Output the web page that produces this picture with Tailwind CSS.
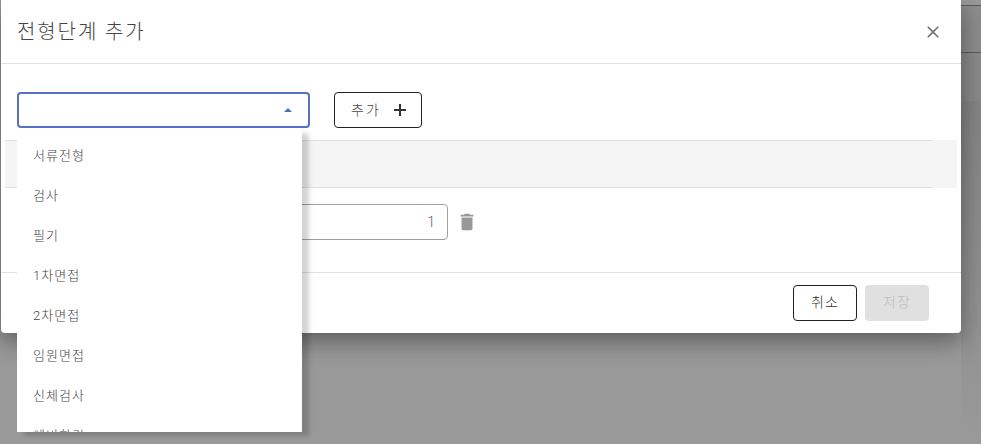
<!DOCTYPE html>
<html lang="ko">
<head>
  <meta charset="UTF-8">
  <title>전형단계 추가</title>
  <script src="https://cdn.jsdelivr.net/npm/@tailwindcss/browser@4"></script>
</head>
<body class="h-[444px] w-[981px] overflow-hidden bg-[#999999] font-['Roboto','Noto_Sans_CJK_KR',sans-serif]">
  <div class="relative h-[444px] w-[981px] overflow-hidden">
    <!-- 모달 뒤 배경 -->
    <div class="flex h-[444px] flex-col items-end">
      <div class="mt-[5px] h-[48px] w-[20px] border-y border-[#5a5a5a] bg-[#8c8c8c]"></div>
      <div class="h-[49px] w-[20px] border-b border-[#858585] bg-[#8a8a8a]"></div>
      <div class="h-[342px] w-[20px] bg-gradient-to-b from-[#848484] to-[#999999]"></div>
    </div>

    <!-- 모달 -->
    <div class="absolute left-[1px] top-0 flex h-[333px] w-[960px] flex-col rounded-b-[4px] bg-white shadow-[0_8px_24px_rgba(0,0,0,0.4)]">
      <div class="flex h-[64px] flex-none items-center justify-between border-b border-[#e0e0e0] pl-[16px] pr-[18px]">
        <h2 class="text-[20px] font-light tracking-[1.9px] text-[#444444]">전형단계 추가</h2>
        <svg class="h-[20px] w-[20px] text-[#757575]" viewBox="0 0 24 24" fill="currentColor"><path d="M19 6.41 17.59 5 12 10.59 6.41 5 5 6.41 10.59 12 5 17.59 6.41 19 12 13.41 17.59 19 19 17.59 13.41 12z"/></svg>
      </div>

      <div class="flex-1">
        <div class="flex items-center pl-[16px] pt-[28px]">
          <div class="flex h-[36px] w-[293px] items-center justify-end rounded-[4px] border-2 border-[#5570c4] pr-[16px]">
            <span class="h-0 w-0 border-x-[4px] border-b-[4px] border-x-transparent border-b-[#4f6fc4]"></span>
          </div>
          <button class="ml-[24px] flex h-[36px] w-[88px] items-center justify-center gap-[12px] rounded-[4px] border border-[#222222] pl-[2px] text-[14px] font-light tracking-[2px] text-[#444444]">
            추가
            <svg class="h-[14px] w-[14px]" viewBox="0 0 14 14" fill="#333333"><path d="M6 1h2v5h5v2H8v5H6V8H1V6h5z"/></svg>
          </button>
        </div>

        <div class="mt-[12px] ml-[4px] h-[48px] w-[952px] bg-[#f5f5f5]">
          <div class="h-[48px] w-[928px] border-y border-[#e0e0e0]"></div>
        </div>

        <div class="flex items-center pt-[16px]">
          <div class="ml-[290px] flex h-[36px] w-[157px] items-center justify-end rounded-[4px] border border-[#a0a0a0] pr-[12px] text-[14px] font-light text-[#666666]">1</div>
          <svg class="ml-[8px] h-[22px] w-[22px] text-[#999999]" viewBox="0 0 24 24" fill="currentColor"><path d="M6 19c0 1.1.9 2 2 2h8c1.1 0 2-.9 2-2V7H6v12zM19 4h-3.5l-1-1h-5l-1 1H5v2h14V4z"/></svg>
        </div>
      </div>

      <div class="flex h-[61px] flex-none items-center justify-end gap-[8px] border-t border-[#e0e0e0] pb-[1px] pr-[32px]">
        <button class="h-[36px] w-[64px] rounded-[4px] border border-[#222222] text-[14px] font-light tracking-[1px] text-[#333333]">취소</button>
        <button class="h-[36px] w-[64px] rounded-[4px] bg-[#e0e0e0] text-[14px] font-light tracking-[1px] text-[#bdbdbd]">저장</button>
      </div>
    </div>

    <!-- 드롭다운 목록 -->
    <ul class="absolute left-[17px] top-[129px] h-[303px] w-[285px] overflow-hidden rounded-t-[4px] bg-white text-[13px] font-light tracking-[1px] text-[#444444] shadow-[7px_4px_4px_rgba(0,0,0,0.17)]">
      <li class="mt-[7px] flex h-[40px] items-center pl-[16px]">서류전형</li>
      <li class="flex h-[40px] items-center pl-[16px]">검사</li>
      <li class="flex h-[40px] items-center pl-[16px]">필기</li>
      <li class="flex h-[40px] items-center pl-[16px]">1차면접</li>
      <li class="flex h-[40px] items-center pl-[16px]">2차면접</li>
      <li class="flex h-[40px] items-center pl-[16px]">임원면접</li>
      <li class="flex h-[40px] items-center pl-[16px]">신체검사</li>
      <li class="flex h-[40px] items-center pl-[16px]">예비합격</li>
    </ul>
  </div>
</body>
</html>
